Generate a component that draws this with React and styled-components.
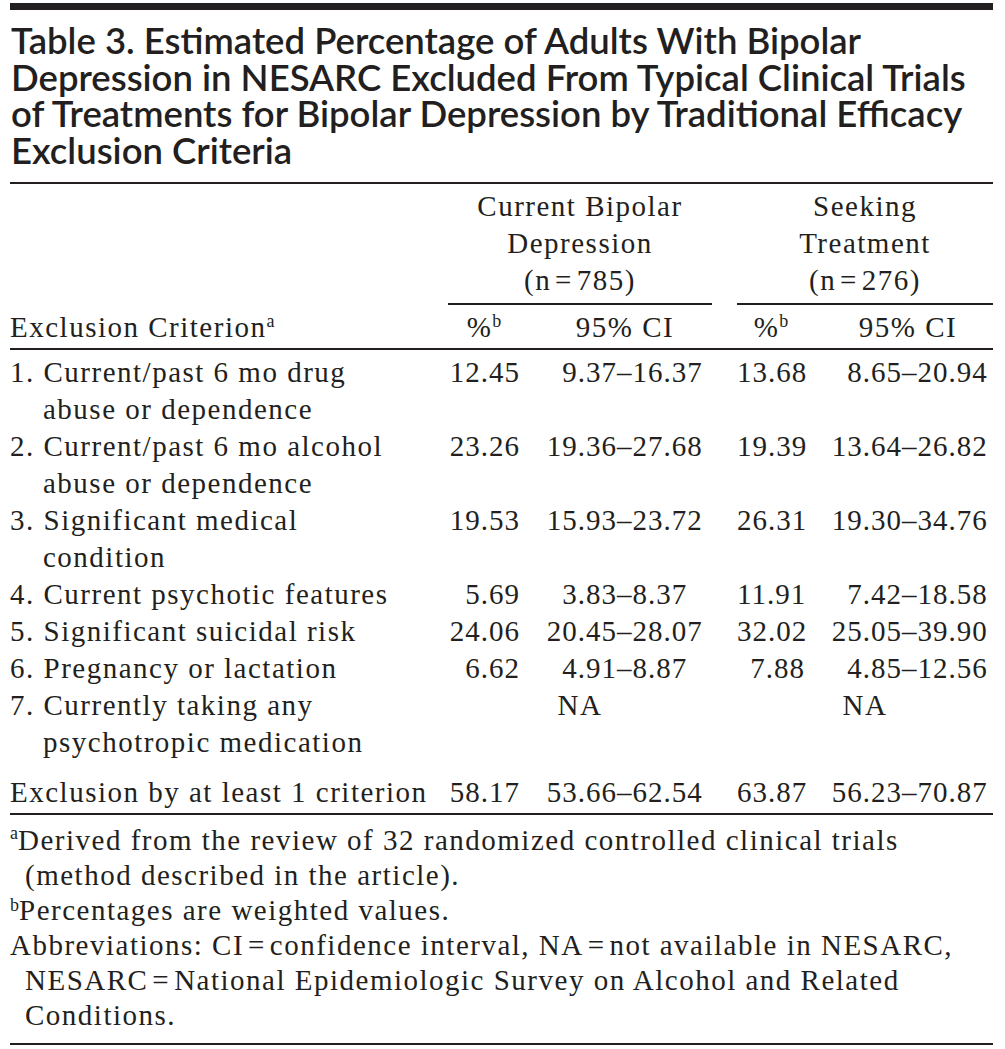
import React from 'react';
import styled, { createGlobalStyle } from 'styled-components';

const GlobalStyle = createGlobalStyle`
  body {
    margin: 0;
    background: #ffffff;
  }
`;

const ink = '#231f20';
const eq = '\u200a=\u200a';

const groups = [
  { name: ['Current Bipolar', 'Depression', `(n${eq}785)`] },
  { name: ['Seeking', 'Treatment', `(n${eq}276)`] }
];

// each row: label lines, then [pct, ciLow, ciHigh] for both groups (null = NA)
const rows = [
  { label: ['1. Current/past 6 mo drug', 'abuse or dependence'], a: ['12.45', '9.37', '16.37'], b: ['13.68', '8.65', '20.94'] },
  { label: ['2. Current/past 6 mo alcohol', 'abuse or dependence'], a: ['23.26', '19.36', '27.68'], b: ['19.39', '13.64', '26.82'] },
  { label: ['3. Significant medical', 'condition'], a: ['19.53', '15.93', '23.72'], b: ['26.31', '19.30', '34.76'] },
  { label: ['4. Current psychotic features'], a: ['5.69', '3.83', '8.37'], b: ['11.91', '7.42', '18.58'] },
  { label: ['5. Significant suicidal risk'], a: ['24.06', '20.45', '28.07'], b: ['32.02', '25.05', '39.90'] },
  { label: ['6. Pregnancy or lactation'], a: ['6.62', '4.91', '8.87'], b: ['7.88', '4.85', '12.56'] },
  { label: ['7. Currently taking any', 'psychotropic medication'], a: null, b: null }
];

const total = { label: ['Exclusion by at least 1 criterion'], a: ['58.17', '53.66', '62.54'], b: ['63.87', '56.23', '70.87'] };

const Cells = ({ values }) => {
  if (!values) {
    return <Wide>NA</Wide>;
  }
  return (
    <>
      <Pct>{values[0]}</Pct>
      <Ci>
        <Low>{values[1]}</Low>
        <span>–</span>
        <span>{values[2]}</span>
      </Ci>
    </>
  );
};

const withBreaks = (lines) =>
  lines.map((line, i) => (
    <React.Fragment key={i}>
      {i > 0 && <br />}
      {line}
    </React.Fragment>
  ));

const App = () => {
  return (
    <Page>
      <GlobalStyle />
      <TopRule />
      <Title>
        Table 3. Estimated Percentage of Adults With Bipolar<br />
        Depression in NESARC Excluded From Typical Clinical Trials<br />
        of Treatments for Bipolar Depression by Traditional Efficacy<br />
        Exclusion Criteria
      </Title>

      <Table>
        <GroupRow>
          <div />
          <GroupHead>{withBreaks(groups[0].name)}</GroupHead>
          <div />
          <GroupHead>{withBreaks(groups[1].name)}</GroupHead>
        </GroupRow>

        <HeadRow>
          <Label>
            Exclusion Criterion<Sup $lift={10}>a</Sup>
          </Label>
          <ColHead>
            %<Sup $lift={10}>b</Sup>
          </ColHead>
          <ColHead $shift>95% CI</ColHead>
          <div />
          <ColHead>
            %<Sup $lift={10}>b</Sup>
          </ColHead>
          <ColHead $shift>95% CI</ColHead>
        </HeadRow>

        <Body>
          {rows.map((row) => (
            <DataRow key={row.label[0]}>
              <Label>{withBreaks(row.label)}</Label>
              <Cells values={row.a} />
              <div />
              <Cells values={row.b} />
            </DataRow>
          ))}
          <DataRow $total>
            <Label>{total.label[0]}</Label>
            <Cells values={total.a} />
            <div />
            <Cells values={total.b} />
          </DataRow>
        </Body>
      </Table>

      <Notes>
        <Note>
          <Sup $lift={11}>a</Sup>Derived from the review of 32 randomized controlled clinical trials<br />
          (method described in the article).
        </Note>
        <Note>
          <Sup $lift={9}>b</Sup>Percentages are weighted values.
        </Note>
        <Note>
          Abbreviations: CI{eq}confidence interval, NA{eq}not available in NESARC,<br />
          NESARC{eq}National Epidemiologic Survey on Alcohol and Related<br />
          Conditions.
        </Note>
      </Notes>
    </Page>
  );
};

// Styled components
const Page = styled.div`
  width: 983px;
  padding: 3px 12px 0 10px;
  color: ${ink};
  font-family: 'Liberation Serif', 'Times New Roman', serif;
  font-size: 29px;
  letter-spacing: 1.5px;
`;

const TopRule = styled.div`
  height: 7px;
  background: ${ink};
`;

const Title = styled.h1`
  margin: 12px 0 0;
  padding: 0 0 13px 1px;
  border-bottom: 2px solid ${ink};
  font-family: Lato, 'Open Sans', sans-serif;
  font-weight: 600;
  font-size: 36.5px;
  line-height: 36.7px;
  letter-spacing: 0;
  white-space: nowrap;
`;

const Table = styled.div`
  line-height: 37px;
`;

const gridCols = '438px 72px 192px 25px 68px 188px';

const GroupRow = styled.div`
  display: grid;
  grid-template-columns: 438px 264px 25px 256px;
  padding-top: 4px;
`;

const GroupHead = styled.div`
  text-align: center;
  padding-bottom: 4px;
  border-bottom: 2px solid ${ink};
`;

const HeadRow = styled.div`
  display: grid;
  grid-template-columns: ${gridCols};
  padding: 4px 0 2px;
  border-bottom: 2px solid ${ink};
`;

const ColHead = styled.div`
  text-align: center;
  padding-left: ${(p) => (p.$shift ? '18px' : '0')};
`;

const Body = styled.div`
  padding-top: 4px;
`;

const DataRow = styled.div`
  display: grid;
  grid-template-columns: ${gridCols};
  ${(p) =>
    p.$total &&
    `
    padding: 13px 0 2px;
    border-bottom: 2px solid ${ink};
  `}
`;

const Label = styled.div`
  padding-left: 33px;
  text-indent: -33px;
  white-space: nowrap;
`;

const Pct = styled.div`
  text-align: right;
  letter-spacing: 1px;
`;

const Ci = styled.div`
  display: grid;
  grid-template-columns: 97px auto 1fr;
  letter-spacing: 1px;
  white-space: nowrap;
`;

const Low = styled.span`
  text-align: right;
`;

const Wide = styled.div`
  grid-column: span 2;
  text-align: center;
`;

const Sup = styled.span`
  font-size: 18px;
  letter-spacing: 0;
  line-height: 0;
  vertical-align: ${(p) => p.$lift}px;
`;

const Notes = styled.div`
  line-height: 35px;
  padding: 8px 0 10px;
  border-bottom: 2px solid ${ink};
`;

const Note = styled.div`
  padding-left: 15px;
  text-indent: -15px;
  white-space: nowrap;
`;

export default App;
